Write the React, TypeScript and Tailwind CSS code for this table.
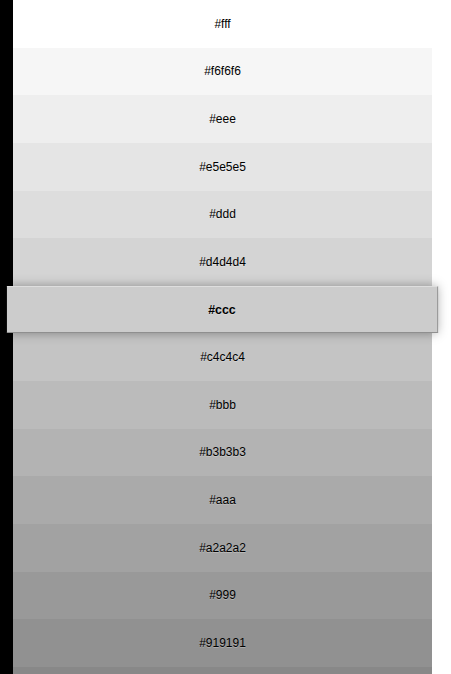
const rows = [
  { hex: '#fff', bg: 'bg-[#ffffff]' },
  { hex: '#f6f6f6', bg: 'bg-[#f6f6f6]' },
  { hex: '#eee', bg: 'bg-[#eeeeee]' },
  { hex: '#e5e5e5', bg: 'bg-[#e5e5e5]' },
  { hex: '#ddd', bg: 'bg-[#dddddd]' },
  { hex: '#d4d4d4', bg: 'bg-[#d4d4d4]' },
  { hex: '#ccc', bg: 'bg-[#cccccc]', active: true },
  { hex: '#c4c4c4', bg: 'bg-[#c4c4c4]' },
  { hex: '#bbb', bg: 'bg-[#bbbbbb]' },
  { hex: '#b3b3b3', bg: 'bg-[#b3b3b3]' },
  { hex: '#aaa', bg: 'bg-[#aaaaaa]' },
  { hex: '#a2a2a2', bg: 'bg-[#a2a2a2]' },
  { hex: '#999', bg: 'bg-[#999999]' },
  { hex: '#919191', bg: 'bg-[#919191]' },
  { hex: '#888', bg: 'bg-[#888888]' },
]

export default function App() {
  return (
    <div className="flex h-[674px] overflow-hidden bg-white font-['Liberation_Sans',Arial,sans-serif]">
      {/* left black strip */}
      <div className="w-[13px] shrink-0 bg-black" />

      <ul className="w-[419px] shrink-0">
        {rows.map(r => (
          <li key={r.hex}
            className={`flex h-[47.64px] items-center justify-center text-[12px] text-black [text-shadow:0_1px_0_rgba(255,255,255,0.25)] ${r.bg} ${
              r.active
                ? 'relative z-10 scale-x-[1.029] border-t border-t-[#dedede] border-b border-b-[#8f8f8f] border-r border-r-[#999] font-bold shadow-[0_0_10px_rgba(0,0,0,0.35)]'
                : ''
            }`}>
            {r.hex}
          </li>
        ))}
      </ul>
    </div>
  )
}
